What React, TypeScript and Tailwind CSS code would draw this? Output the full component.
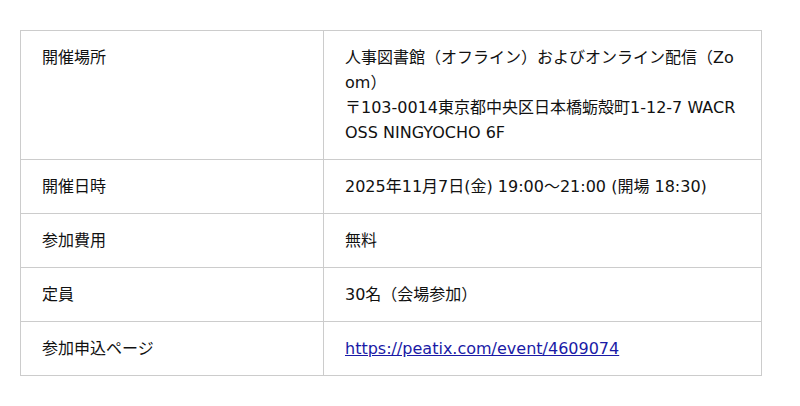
export default function App() {
  const rows: { label: string; content: React.ReactNode }[] = [
    {
      label: "開催場所",
      content: (
        <>
          人事図書館（オフライン）およびオンライン配信（Zoom）
          <br />
          〒103-0014東京都中央区日本橋蛎殻町1-12-7 WACROSS NINGYOCHO 6F
        </>
      ),
    },
    { label: "開催日時", content: "2025年11月7日(金) 19:00～21:00 (開場 18:30)" },
    { label: "参加費用", content: "無料" },
    { label: "定員", content: "30名（会場参加）" },
    {
      label: "参加申込ページ",
      content: (
        <a href="#" className="text-[#1a1aa6] underline">
          https://peatix.com/event/4609074
        </a>
      ),
    },
  ];
  return (
    <div
      className="bg-white w-[800px] h-[406px] pt-[30px] pl-[20px]"
      style={{ fontFamily: '"DejaVu Sans", "Noto Sans CJK JP", sans-serif' }}
    >
      <table className="border-collapse w-[742px] text-[16px] leading-[25px] text-[#111]">
        <tbody>
          {rows.map((r) => (
            <tr key={r.label}>
              <td className="border border-[#cccccc] w-[303px] px-[21px] py-[14px] align-top">
                {r.label}
              </td>
              <td className="border border-[#cccccc] px-[21px] py-[14px] align-top break-all">
                {r.content}
              </td>
            </tr>
          ))}
        </tbody>
      </table>
    </div>
  );
}
